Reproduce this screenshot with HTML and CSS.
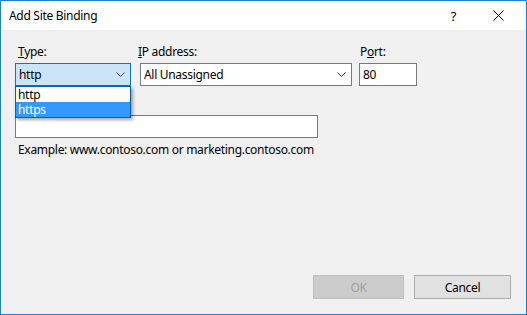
FILE: index.html
```html
<!DOCTYPE html>
<html lang="en">
<head>
    <meta charset="UTF-8">
    <title>Add Site Binding</title>
    <link rel="stylesheet" href="styles.css">
</head>
<body>
    <div class="dialog">
        <div class="titlebar">
            <span class="title">Add Site Binding</span>
            <span class="help">?</span>
            <svg class="close" width="11" height="11" viewBox="0 0 11 11">
                <path d="M0.5 0.5 L10.5 10.5 M10.5 0.5 L0.5 10.5" stroke="#000" stroke-width="1" fill="none"/>
            </svg>
        </div>

        <div class="content">
            <div class="row">
                <div class="field type-field">
                    <label class="lbl"><u>T</u>ype:</label>
                    <div class="select focused">
                        <span>http</span>
                        <svg class="chev" width="9" height="5" viewBox="0 0 9 5"><path d="M0.5 0.5 L4.5 4.5 L8.5 0.5" stroke="#444" fill="none"/></svg>
                    </div>
                    <!-- open list covers the host name label -->
                    <ul class="popup">
                        <li>http</li>
                        <li class="sel">https</li>
                    </ul>
                </div>
                <div class="field ip-field">
                    <label class="lbl"><u>I</u>P address:</label>
                    <div class="select">
                        <span>All Unassigned</span>
                        <svg class="chev" width="9" height="5" viewBox="0 0 9 5"><path d="M0.5 0.5 L4.5 4.5 L8.5 0.5" stroke="#444" fill="none"/></svg>
                    </div>
                </div>
                <div class="field port-field">
                    <label class="lbl">P<u>o</u>rt:</label>
                    <div class="textbox">80</div>
                </div>
            </div>

            <div class="host-lbl"></div>
            <div class="textbox host"></div>
            <p class="hint">Example: www.contoso.com or marketing.contoso.com</p>
        </div>

        <div class="footer">
            <button class="btn disabled">OK</button>
            <button class="btn">Cancel</button>
        </div>
    </div>
</body>
</html>
```

FILE: styles.css
```css
body {
    margin: 0;
    font-family: "Noto Sans", "Open Sans", sans-serif;
    font-size: 12px;
    letter-spacing: -0.3px;
    color: #000;
}

.dialog {
    width: 527px;
    height: 315px;
    box-sizing: border-box;
    border: 1px solid #1883d7;
    background-color: #f0f0f0;
    display: flex;
    flex-direction: column;
}

.titlebar {
    height: 29px;
    background-color: #fff;
    display: flex;
    align-items: center;
}

.title {
    margin-left: 8px;
    flex: 1;
}

.help {
    margin-right: 37px;
    font-size: 13px;
}

.close {
    margin-right: 22px;
}

.content {
    flex: 1;
    padding: 14px 0 0 14px;
}

.row {
    display: flex;
    gap: 9px;
}

.field {
    position: relative;
}

.lbl {
    display: block;
    height: 19px;
    line-height: 15px;
    padding-left: 3px;
}

.type-field { width: 116px; }
.ip-field { width: 212px; }
.ip-field .lbl { padding-left: 0; margin-left: -2px; }
.port-field { width: 58px; margin-left: -2px; }
.port-field .lbl { padding-left: 1px; }

.select,
.textbox {
    height: 23px;
    box-sizing: border-box;
    border: 1px solid #7a7a7a;
    background-color: #fff;
    display: flex;
    align-items: center;
    padding-left: 3px;
}

.select span {
    flex: 1;
}

.select.focused {
    background-color: #cce4f7;
    border-color: #0078d7;
}

.chev {
    margin-right: 5px;
}

.popup {
    position: absolute;
    left: 0;
    top: 42px;
    width: 116px;
    box-sizing: border-box;
    margin: 0;
    padding: 0;
    list-style: none;
    background-color: #fff;
    border: 1px solid #0063b1;
    box-shadow: 2px 2px 3px rgba(0, 0, 0, 0.35);
    z-index: 2;
}

.popup li {
    height: 15px;
    line-height: 15px;
    padding-left: 2px;
}

.popup li.sel {
    background-color: #3399ff;
    color: #fff;
}

.host-lbl {
    height: 29px;
}

.textbox.host {
    width: 303px;
}

.hint {
    margin: 0;
    padding: 4px 0 0 3px;
    line-height: 15px;
}

.footer {
    display: flex;
    justify-content: flex-end;
    gap: 10px;
    padding: 0 15px 15px 0;
}

.btn {
    height: 24px;
    font-family: inherit;
    font-size: 12px;
    letter-spacing: inherit;
    border: 1px solid #adadad;
    background-color: #e1e1e1;
    color: #000;
    width: 97px;
    padding: 0;
}

.btn.disabled {
    width: 91px;
    background-color: #cccccc;
    border-color: #bfbfbf;
    color: #a0a0a0;
}
```
